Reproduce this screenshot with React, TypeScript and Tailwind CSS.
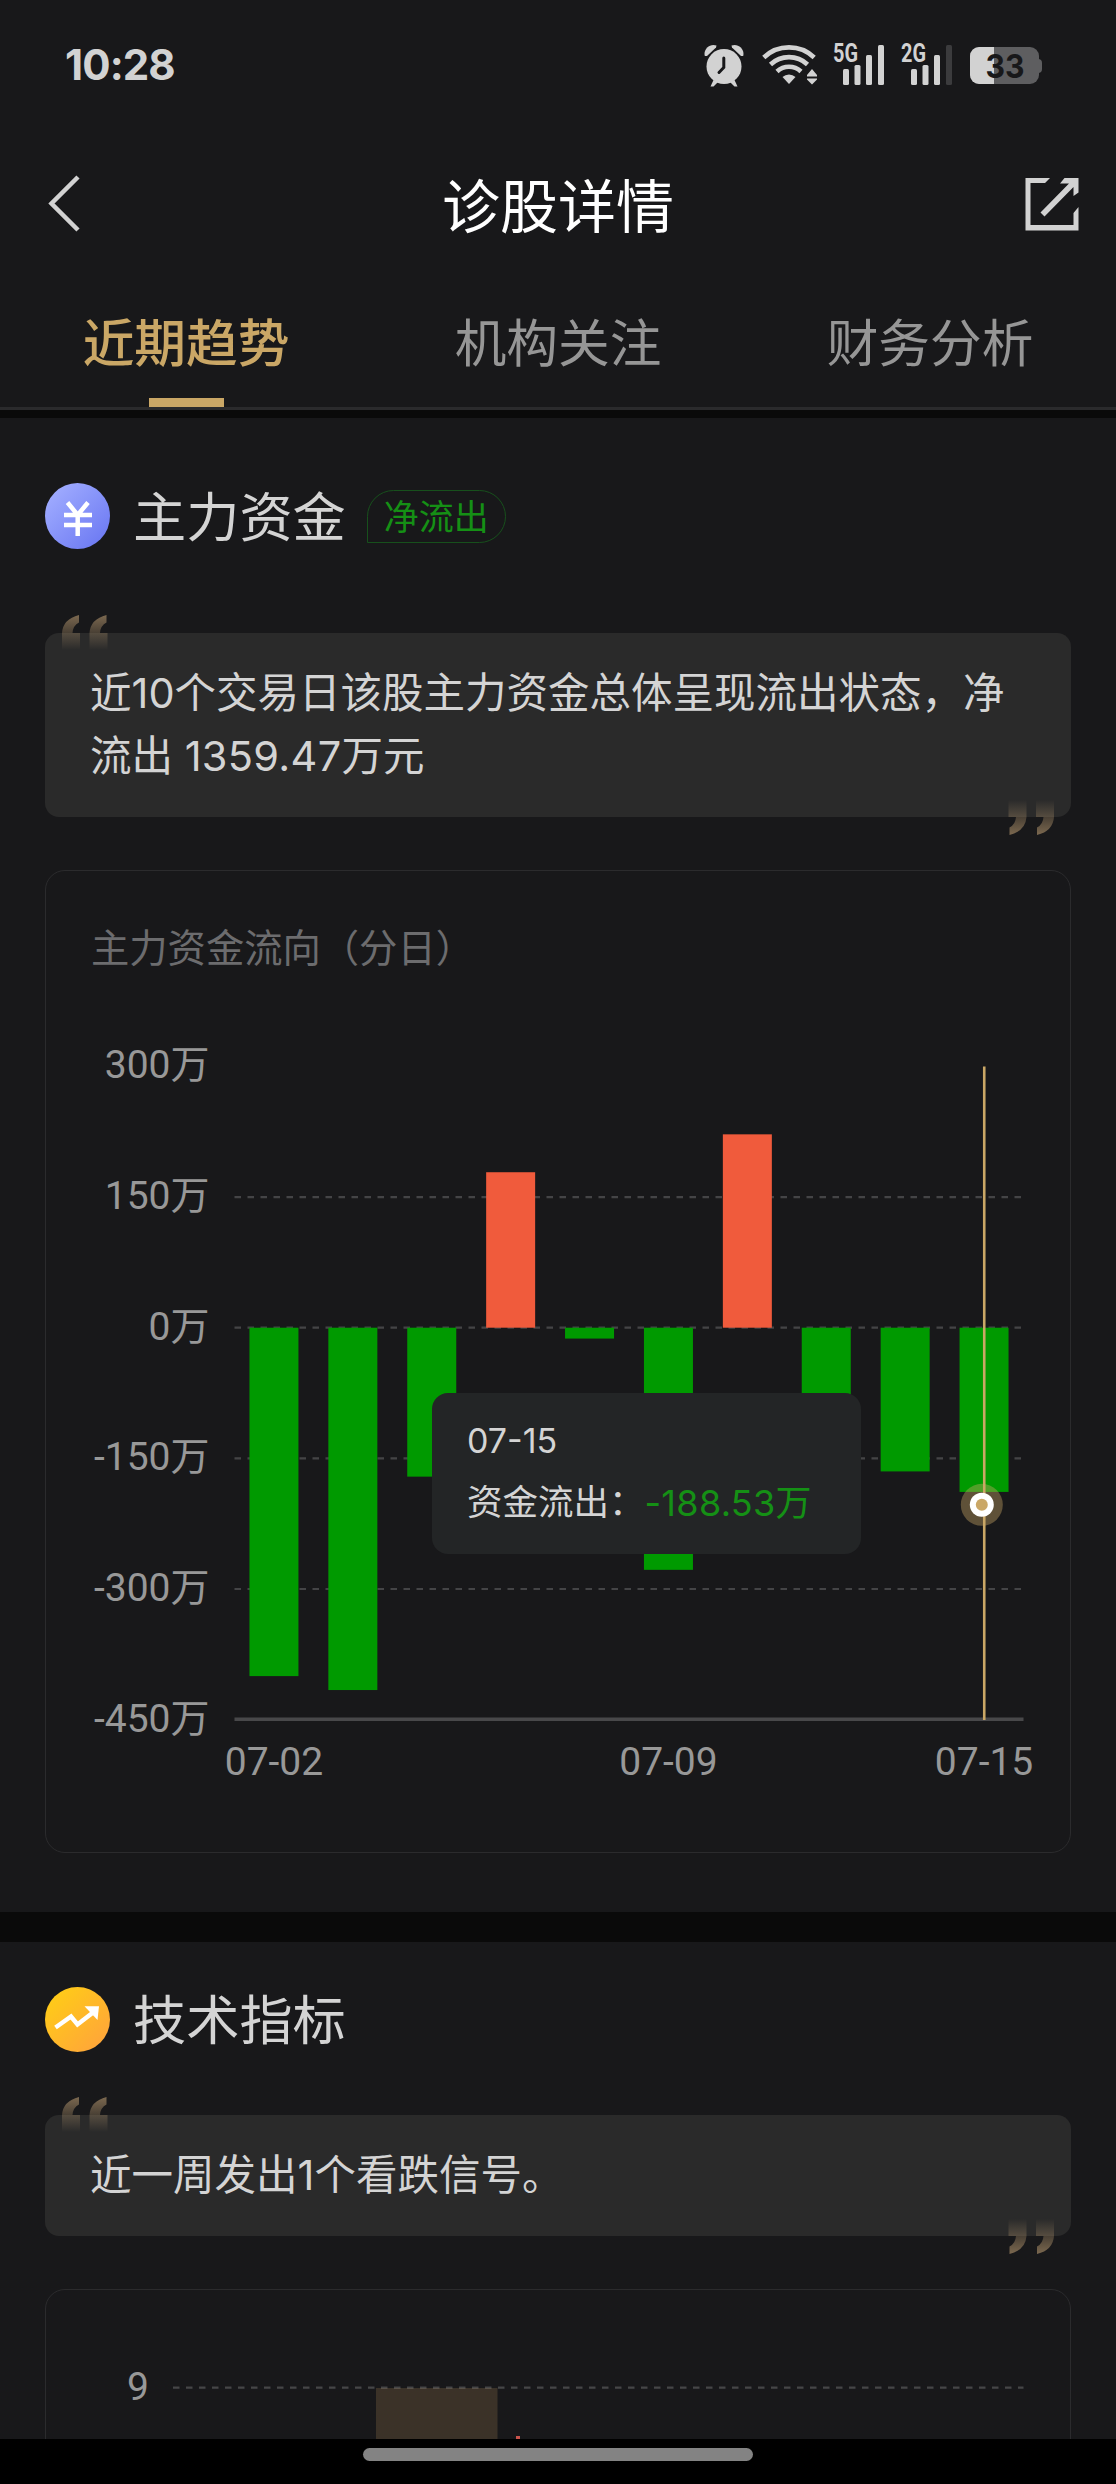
import type { ReactNode } from "react";

type FlowPoint = { date: string; value: number };

const flowData: FlowPoint[] = [
  { date: "07-02", value: -400 },
  { date: "07-03", value: -416 },
  { date: "07-04", value: -171 },
  { date: "07-07", value: 178.5 },
  { date: "07-08", value: -12.5 },
  { date: "07-09", value: -278 },
  { date: "07-10", value: 222 },
  { date: "07-11", value: -130 },
  { date: "07-14", value: -165 },
  { date: "07-15", value: -188.53 },
];

const ticks = [300, 150, 0, -150, -300, -450];
const tabs = ["近期趋势", "机构关注", "财务分析"];

const PLOT_LEFT = 188.5;
const PLOT_RIGHT = 977.5;
const STEP = (PLOT_RIGHT - PLOT_LEFT) / flowData.length;
const BAR_WIDTH = 49;

const toY = (value: number) => 351.7 - value * 0.871;
const toX = (index: number) => PLOT_LEFT + STEP * (index + 0.5);

function SignalIcon({ label, dimLast = false }: { label: string; dimLast?: boolean }) {
  return (
    <svg width="52" height="52" viewBox="0 -8 52 52" fill="#d2d2d2" className="-mt-2">
      <text
        x="0"
        y="19"
        textLength="25"
        lengthAdjust="spacingAndGlyphs"
        className="font-['Roboto'] text-[25px] font-bold"
      >
        {label}
      </text>
      <rect x="10" y="26" width="6" height="16" rx="1.5" />
      <rect x="21.5" y="22" width="6" height="20" rx="1.5" />
      <rect x="33" y="12" width="6" height="30" rx="1.5" />
      <rect x="45" y="2" width="6" height="40" rx="1.5" fill={dimLast ? "#3b3b3d" : "#d2d2d2"} />
    </svg>
  );
}

function StatusBar() {
  return (
    <div className="flex h-[130px] items-center justify-between pr-[74px] pl-[65px]">
      <div className="font-['Inter'] text-[42px] leading-none font-bold tracking-[-0.9px] text-[#d2d2d2]">10:28</div>
      <div className="flex items-start">
        <svg width="40" height="44" viewBox="0 0 40 44" fill="#d2d2d2">
          <path d="M0.800 13C-1 6 6 0 12.500 2.500L12 4.500L3 13z" />
          <path d="M39.200 13C41 6 34 0 27.500 2.500L28 4.500L37 13z" />
          <circle cx="20" cy="23.500" r="17.500" />
          <path d="M9.500 37L6.500 43.500h3L14 39zM30.500 37L33.500 43.500h-3L26 39z" />
          <path d="M19.800 15v9.500L15 29.500" fill="none" stroke="#18181a" strokeWidth="3" strokeLinecap="round" />
        </svg>
        <svg className="ml-[18px]" width="56" height="44" viewBox="0 0 56 44" fill="none">
          <g stroke="#d2d2d2" strokeWidth="4.600">
            <path d="M1.800 14.500a36.500 36.500 0 0 1 50.400 0" />
            <path d="M8.500 21.500a27 27 0 0 1 37 0" />
            <path d="M15 28.500a17.600 17.600 0 0 1 24 0" />
          </g>
          <path d="M20.500 34a9.500 9.500 0 0 1 13 0L27 41z" fill="#d2d2d2" />
          <path d="M50 26l5 6v1.500H45v-1.500zM50 41.500l-5-5v-1h10v1z" fill="#d2d2d2" />
        </svg>
        <div className="ml-[15px] flex gap-4">
          <SignalIcon label="5G" />
          <SignalIcon label="2G" dimLast />
        </div>
        <svg className="ml-[17px]" width="72" height="44" viewBox="0 0 72 44">
          <rect x="60" y="16" width="12" height="14" rx="4" fill="#5e5e60" />
          <rect x="0" y="4" width="69" height="37" rx="9" fill="#5e5e60" />
          <path d="M24 4H9a9 9 0 0 0-9 9v19a9 9 0 0 0 9 9h15z" fill="#d2d2d2" />
          <text
            x="15.500"
            y="34.500"
            textLength="39"
            lengthAdjust="spacingAndGlyphs"
            fill="#18181a"
            className="font-['Inter'] text-[33px] font-bold"
          >
            33
          </text>
        </svg>
      </div>
    </div>
  );
}

function Header() {
  return (
    <div className="flex h-[154px] items-center justify-between px-9">
      <svg width="56" height="58" viewBox="-12 0 56 58" fill="none" className="-mt-[6px]">
        <path d="M30 2L3.500 28.500L30 55" stroke="#d2d2d2" strokeWidth="4.500" />
      </svg>
      <h1 className="text-[58px] leading-none font-normal text-white">诊股详情</h1>
      <svg width="56" height="56" viewBox="0 0 56 56" fill="none" className="-mt-[7px]">
        <path d="M26 2L21 7H6.500v42h43V37L54.500 31v23.500H1.500V2z" fill="#d2d2d2" />
        <path d="M40.500 2h14v14.500L49.500 20V11L20.500 40.500l-4-4L45 7.500h-9z" fill="#d2d2d2" />
      </svg>
    </div>
  );
}

function Tabs() {
  return (
    <div className="flex h-[126px] border-b-[3px] border-[#2a2a2c]">
      {tabs.map((tab, index) => (
        <div key={tab} className="flex flex-1 flex-col items-center justify-between pt-[33px]">
          <span
            className={
              index === 0
                ? "text-[51.700px] leading-[52px] font-medium text-[#caa766]"
                : "text-[51.700px] leading-[52px] text-[#969696]"
            }
          >
            {tab}
          </span>
          {index === 0 ? <div className="h-[9px] w-[75px] bg-[#caa766]" /> : null}
        </div>
      ))}
    </div>
  );
}

function QuoteMark({ id }: { id: string }) {
  return (
    <svg width="46" height="35" viewBox="0 0 46 35">
      <defs>
        <linearGradient id={id} x1="0" y1="0" x2="0" y2="1">
          <stop offset="0" stopColor="#caa87a" stopOpacity="0.560" />
          <stop offset="1" stopColor="#caa87a" stopOpacity="0" />
        </linearGradient>
      </defs>
      <path
        d="M17 0V7.500Q11 10.500 10.500 18H18V35H0V18Q1 4 17 0zM44.500 0V7.500Q38.500 10.500 38 18H45.500V35H27.500V18Q28.500 4 44.500 0z"
        fill={`url(#${id})`}
      />
    </svg>
  );
}

function QuoteBox({ id, children }: { id: string; children: ReactNode }) {
  return (
    <div className="relative rounded-[14px] bg-[#2a2a2a] px-[45px] pt-[29px] pb-[29px] text-[41.500px] leading-[63px] text-[#d4d4d4]">
      <div className="absolute -top-[18px] left-[17px]">
        <QuoteMark id={`${id}-open`} />
      </div>
      {children}
      <div className="absolute right-[17px] -bottom-[18px] rotate-180">
        <QuoteMark id={`${id}-close`} />
      </div>
    </div>
  );
}

function YenIcon() {
  return (
    <svg width="65" height="66" viewBox="0 0 65 66" fill="none">
      <defs>
        <linearGradient id="yen" x1="0.100" y1="0.100" x2="0.900" y2="0.900">
          <stop stopColor="#a0acff" />
          <stop offset="1" stopColor="#6d7af3" />
        </linearGradient>
      </defs>
      <ellipse cx="32.500" cy="33" rx="32.500" ry="33" fill="url(#yen)" />
      <path d="M22.500 19.500L32.700 32L43 19.500M19 32h28M19 42h28M32.700 32v21" stroke="white" strokeWidth="4.500" />
    </svg>
  );
}

function TrendIcon() {
  return (
    <svg width="65" height="65" viewBox="0 0 65 65" fill="none">
      <defs>
        <linearGradient id="trend" x1="0.100" y1="0.100" x2="0.900" y2="0.900">
          <stop stopColor="#ffcc17" />
          <stop offset="1" stopColor="#ffa53a" />
        </linearGradient>
      </defs>
      <circle cx="32.500" cy="32.500" r="32.500" fill="url(#trend)" />
      <path d="M10.500 40.500L26 29.500L32.500 37.500L48 25.500" stroke="white" strokeWidth="4.500" />
      <path d="M39.500 19.300H54L52.500 33z" fill="white" />
    </svg>
  );
}

function FlowChart() {
  const activeX = toX(flowData.length - 1);

  return (
    <div className="relative">
      <svg width="1026" height="876" viewBox="0 0 1026 876" className="font-['Roboto','Noto_Sans_CJK_SC',sans-serif] text-[39px]">
        {ticks.map((tick) => (
          <text key={tick} x="163.500" y={toY(tick) + 12} textAnchor="end" fill="#989898">
            {tick}万
          </text>
        ))}
        {ticks.slice(1, -1).map((tick) => (
          <path
            key={tick}
            d={`M${PLOT_LEFT} ${toY(tick)}H${PLOT_RIGHT}`}
            stroke="#444446"
            strokeWidth="2.200"
            strokeDasharray="6.500 6.500"
          />
        ))}
        {flowData.map(({ date, value }, index) => (
          <rect
            key={date}
            x={toX(index) - BAR_WIDTH / 2}
            y={Math.min(toY(0), toY(value))}
            width={BAR_WIDTH}
            height={Math.abs(value) * 0.871}
            fill={value > 0 ? "#f05b3c" : "#009a00"}
          />
        ))}
        <path d={`M${PLOT_LEFT} 743.300H${PLOT_RIGHT}`} stroke="#48484a" strokeWidth="3.500" />
        {[0, 5, 9].map((index) => (
          <text key={index} x={toX(index)} y="799" textAnchor="middle" fill="#989898">
            {flowData[index].date}
          </text>
        ))}
        <circle cx={935.800} cy="528.800" r="21" fill="#caa766" fillOpacity="0.400" />
        <path d={`M${activeX + 0.200} 90.500V744`} stroke="#caa766" strokeWidth="2.600" />
        <circle cx={935.800} cy="528.800" r="12" fill="white" />
        <circle cx={935.800} cy="528.800" r="6" fill="#caa766" />
      </svg>
      <div className="absolute top-[417px] left-[386px] h-[161px] w-[429px] rounded-[16px] bg-[#232526] px-[35px] pt-[24px] text-[35.500px] text-[#d4d4d4]">
        <div className="text-[34px] leading-[48px]">07-15</div>
        <div className="mt-[10px] flex leading-[56px] whitespace-nowrap">
          <span>资金流出：</span>
          <span className="text-[36px] tracking-[0.3px] text-[#159015]">-188.53万</span>
        </div>
      </div>
    </div>
  );
}

function IndicatorChart() {
  return (
    <svg width="1026" height="149" viewBox="0 0 1026 149" className="font-['Roboto','Noto_Sans_CJK_SC',sans-serif] text-[39px]">
      <rect x="330" y="98" width="121.500" height="51" fill="#3b3228" />
      <path d="M127 97.700H977.500" stroke="#fff" strokeOpacity="0.200" strokeWidth="2.200" strokeDasharray="6.500 6.500" />
      <text x="81" y="109.500" fill="#989898">
        9
      </text>
      <rect x="470" y="146" width="4" height="3" fill="#c9534c" />
    </svg>
  );
}

export default function App() {
  return (
    <div className="flex h-[2484px] w-[1116px] flex-col overflow-hidden bg-[#18181a] font-['Inter','Noto_Sans_CJK_SC',sans-serif]">
      <StatusBar />
      <Header />
      <Tabs />
      <div className="h-2 shrink-0 bg-[#0a0a0a]" />

      <section className="h-[1494px] shrink-0 px-[45px] pt-[65px]">
        <div className="flex h-[66px] items-center">
          <YenIcon />
          <h2 className="ml-[23px] pt-[3px] text-[53.200px] leading-none text-[#d4d4d4]">主力资金</h2>
          <span className="ml-[21px] flex h-[53px] w-[139px] items-center justify-center rounded-[27px] rounded-bl-none border border-[#17501c] pt-[2px] text-[35px] text-[#159015]">
            净流出
          </span>
        </div>
        <div className="mt-[84px]">
          <QuoteBox id="flow">
            近10个交易日该股主力资金总体呈现流出状态，净
            <br />
            流出 <span className="tracking-[0.3px]">1359.47</span>万元
          </QuoteBox>
        </div>
        <div className="mt-[53px] h-[983px] rounded-[20px] border border-[#2b2b2d] pt-[49px]">
          <h3 className="pl-[45px] text-[38.300px] leading-[56px] text-[#6c6c6e]">主力资金流向（分日）</h3>
          <FlowChart />
        </div>
      </section>

      <div className="h-[30px] shrink-0 bg-[#0a0a0a]" />

      <section className="h-[497px] shrink-0 overflow-hidden px-[45px] pt-[45px]">
        <div className="flex h-[65px] items-center">
          <TrendIcon />
          <h2 className="ml-[23px] pt-[2px] text-[53.200px] leading-none text-[#d4d4d4]">技术指标</h2>
        </div>
        <div className="mt-[63px]">
          <QuoteBox id="tech">近一周发出1个看跌信号。</QuoteBox>
        </div>
        <div className="mt-[53px] h-[300px] rounded-[20px] border border-[#2b2b2d]">
          <IndicatorChart />
        </div>
      </section>

      <div className="flex h-[45px] shrink-0 justify-center bg-black pt-[9px]">
        <div className="h-[13px] w-[390px] rounded-full bg-[#838383]" />
      </div>
    </div>
  );
}
